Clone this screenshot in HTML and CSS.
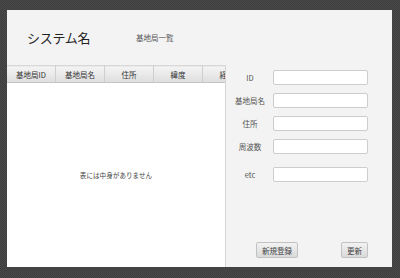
FILE: index.html
```html
<!DOCTYPE html>
<html lang="ja">
<head>
    <meta charset="UTF-8">
    <title>システム名</title>
    <link rel="stylesheet" href="styles.css">
</head>
<body>
    <div class="window">
        <div class="top-bar">
            <h1 class="app-title">システム名</h1>
            <span class="page-title">基地局一覧</span>
        </div>

        <div class="main">
            <div class="table-pane">
                <table class="station-table">
                    <thead>
                        <tr>
                            <th>基地局ID</th>
                            <th>基地局名</th>
                            <th>住所</th>
                            <th>緯度</th>
                            <th>経度</th>
                        </tr>
                    </thead>
                </table>
                <div class="table-empty">表には中身がありません</div>
            </div>

            <div class="form-pane">
                <div class="form-fields">
                    <div class="form-row">
                        <label>ID</label>
                        <input type="text">
                    </div>
                    <div class="form-row">
                        <label>基地局名</label>
                        <input type="text">
                    </div>
                    <div class="form-row">
                        <label>住所</label>
                        <input type="text">
                    </div>
                    <div class="form-row">
                        <label>周波数</label>
                        <input type="text">
                    </div>
                    <div class="form-row form-row-etc">
                        <label>etc</label>
                        <input type="text">
                    </div>
                </div>

                <div class="form-buttons">
                    <button>新規登録</button>
                    <button>更新</button>
                </div>
            </div>
        </div>
    </div>
</body>
</html>
```

FILE: styles.css
```css
body {
    margin: 0;
    height: 278px;
    background-color: #444;
    background-image: repeating-conic-gradient(#484848 0 25%, #3f3f3f 0 50%);
    background-size: 2px 2px;
    font-family: "Noto Sans CJK JP", "Noto Sans", sans-serif;
    color: #333;
    overflow: hidden;
}

.window {
    margin: 10px 0 0 7px;
    width: 385px;
    height: 257px;
    background: #f3f3f3;
    display: flex;
    flex-direction: column;
}

.top-bar {
    height: 55px;
    display: flex;
    align-items: center;
    padding-left: 20px;
    flex-shrink: 0;
}

.app-title {
    margin: 0;
    width: 109px;
    font-size: 13px;
    font-weight: normal;
    letter-spacing: -0.3px;
    color: #222;
}

.page-title {
    font-size: 7.5px;
    color: #555;
}

.main {
    flex: 1;
    display: flex;
    min-height: 0;
}

.table-pane {
    width: 218px;
    background: #fff;
    border-right: 1px solid #d4d4d4;
    display: flex;
    flex-direction: column;
    overflow: hidden;
}

.station-table {
    border-collapse: collapse;
    table-layout: fixed;
    width: 241px;
}

.station-table th {
    width: 48px;
    height: 16px;
    padding: 0;
    font-size: 7.5px;
    font-weight: normal;
    color: #333;
    background: linear-gradient(#f4f4f4, #dedede);
    border-right: 1px solid #cfcfcf;
    border-bottom: 1px solid #c4c4c4;
    border-top: 1px solid #d8d8d8;
    text-align: center;
}

.table-empty {
    flex: 1;
    display: flex;
    align-items: center;
    justify-content: center;
    font-size: 6.6px;
    color: #444;
}

.form-pane {
    flex: 1;
    display: flex;
    flex-direction: column;
    justify-content: space-between;
    padding: 5px 24px 9px 6px;
}

.form-fields {
    display: flex;
    flex-direction: column;
    gap: 8px;
}

.form-row {
    display: flex;
    align-items: center;
    gap: 5px;
}

.form-row-etc {
    margin-top: 5px;
}

.form-row label {
    width: 36px;
    text-align: center;
    font-size: 7.5px;
    color: #555;
}

.form-row input {
    width: 95px;
    height: 15px;
    box-sizing: border-box;
    border: 1px solid #cdcdcd;
    border-radius: 2px;
    background: #fff;
    padding: 0;
}

.form-buttons {
    display: flex;
    justify-content: space-between;
    padding-left: 24px;
}

.form-buttons button {
    height: 16px;
    padding: 0 5px;
    font-family: inherit;
    font-size: 7.5px;
    color: #444;
    background: linear-gradient(#f2f2f2, #dadada);
    border: 1px solid #c2c2c2;
    border-radius: 2px;
}
```
